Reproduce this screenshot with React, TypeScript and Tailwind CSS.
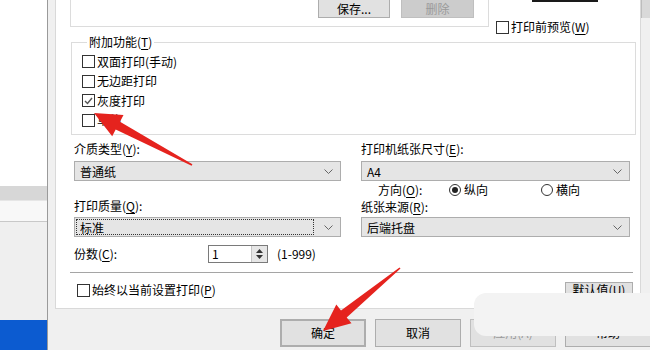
import React from 'react';

const font = { fontFamily: '"Noto Sans CJK SC", "Liberation Sans", sans-serif' };

function Box({ checked = false }: { checked?: boolean }) {
  return (
    <span className="w-[13px] h-[13px] border border-[#333] bg-white flex items-center justify-center shrink-0">
      {checked && (
        <svg width="9" height="8" viewBox="0 0 9 8">
          <path d="M1 4 L3.5 6.5 L8 1" fill="none" stroke="#555" strokeWidth="1.4" />
        </svg>
      )}
    </span>
  );
}

function Check({ label, checked = false }: { label: React.ReactNode; checked?: boolean }) {
  return (
    <div className="flex items-center h-[19.5px] gap-[2px]">
      <Box checked={checked} />
      <span className="leading-[16px]">{label}</span>
    </div>
  );
}

function Key({ k }: { k: string }) {
  return <span className="underline underline-offset-2">{k}</span>;
}

function Chevron() {
  return (
    <svg width="9" height="5" viewBox="0 0 9 5" className="shrink-0">
      <path d="M0.5 0.5 L4.5 4.5 L8.5 0.5" fill="none" stroke="#666" strokeWidth="1" />
    </svg>
  );
}

function Select({ value, focused = false, w }: { value: string; focused?: boolean; w: string }) {
  return (
    <div className={`${w} h-[20px] border border-[#adadad] bg-[#e5e5e5] flex items-center pr-[7px]`}>
      <div className={`flex-1 h-[16px] ml-[1px] mr-[10px] pl-[3px] leading-[15px] ${focused ? 'border border-dotted border-[#333]' : 'border border-transparent'}`}>
        {value}
      </div>
      <Chevron />
    </div>
  );
}

function Radio({ checked = false }: { checked?: boolean }) {
  return (
    <span className="w-[12px] h-[12px] rounded-full border border-[#333] bg-white flex items-center justify-center shrink-0">
      {checked && <span className="w-[6px] h-[6px] rounded-full bg-[#222]" />}
    </span>
  );
}

function Btn({ children, cls = '' }: { children: React.ReactNode; cls?: string }) {
  return (
    <div className={`w-[86px] h-[28px] flex items-center justify-center bg-[#e1e1e1] border border-[#adadad] shrink-0 ${cls}`}>
      {children}
    </div>
  );
}

function Arrow({ tail, tip }: { tail: [number, number]; tip: [number, number] }) {
  const dx = tip[0] - tail[0];
  const dy = tip[1] - tail[1];
  const len = Math.hypot(dx, dy);
  const ux = dx / len;
  const uy = dy / len;
  const nx = -uy;
  const ny = ux;
  const head = 27;
  const bx = tip[0] - ux * head;
  const by = tip[1] - uy * head;
  const pt = (x: number, y: number) => `${x.toFixed(1)},${y.toFixed(1)}`;
  const pts = [
    pt(tail[0] + nx * 0.8, tail[1] + ny * 0.8),
    pt(bx + nx * 4.5, by + ny * 4.5),
    pt(bx + nx * 12, by + ny * 12),
    pt(tip[0], tip[1]),
    pt(bx - nx * 12, by - ny * 12),
    pt(bx - nx * 4.5, by - ny * 4.5),
    pt(tail[0] - nx * 0.8, tail[1] - ny * 0.8),
  ].join(' ');
  return <polygon points={pts} fill="#e5231e" />;
}

export default function App() {
  return (
    <div className="relative w-[650px] h-[350px] overflow-hidden flex text-[12px] text-black bg-[#f0f0f0]" style={font}>
      {/* background window strip */}
      <div className="w-[47px] flex flex-col shrink-0">
        <div className="h-[186px] bg-white" />
        <div className="h-[14px] bg-[#d7d7d7]" />
        <div className="h-[22px] bg-[#f8f8f8] border-t border-[#e6e6e6] border-b border-b-[#c8c8c8]" />
        <div className="flex-1 bg-[#efefef]" />
        <div className="h-[30px] bg-[#0c5bd0]" />
      </div>
      <div className="w-px bg-[#9a9a9a] shrink-0" />

      {/* dialog */}
      <div className="flex-1 flex flex-col">
        <div className="flex">
          <div className="ml-[7px] w-[586px] h-[309px] bg-white border-l border-r border-b border-[#d9d9d9] flex flex-col">
            {/* top row */}
            <div className="flex h-[34px]">
              <div className="ml-[14px] w-[419px] h-[27px] border-l border-r border-b border-[#dcdcdc] flex justify-end pr-[14px] gap-[11px]">
                <div className="w-[72px] h-[18px] bg-[#e1e1e1] border border-[#adadad] border-t-0 flex items-center justify-center leading-[16px]">保存...</div>
                <div className="w-[73px] h-[18px] bg-[#cccccc] border border-[#bfbfbf] border-t-0 flex items-center justify-center text-[#9a9a9a] leading-[16px]">删除</div>
              </div>
              <div className="flex flex-col">
                <div className="ml-[43px] w-[66px] h-[4px] bg-[#e1e1e1] border-l border-r border-b-2 border-[#1a1a1a]" />
                <div className="ml-[7px] mt-[18px] flex items-center gap-[2px]">
                  <Box />
                  <span className="leading-[14px]">打印前预览(<Key k="W" />)</span>
                </div>
              </div>
            </div>

            {/* 附加功能 */}
            <fieldset className="ml-[15px] w-[565px] border border-[#dcdcdc] pl-[10px] pt-[2px] pb-[4px]">
              <legend className="ml-[5px] px-[2px] leading-[16px]">附加功能(<Key k="T" />)</legend>
              <Check label="双面打印(手动)" />
              <Check label="无边距打印" />
              <Check label="灰度打印" checked />
              <Check label="草稿" />
            </fieldset>

            {/* selects */}
            <div className="ml-[18px] mt-[6px] flex gap-[20px]">
              <div className="flex flex-col w-[267px]">
                <div className="h-[16px] leading-[16px]">介质类型(<Key k="Y" />):</div>
                <div className="mt-[4px]"><Select value="普通纸" w="w-[267px]" /></div>
                <div className="mt-[17px] h-[16px] leading-[16px]">打印质量(<Key k="Q" />):</div>
                <div className="mt-[3px]"><Select value="标准" focused w="w-[267px]" /></div>
              </div>
              <div className="flex flex-col w-[269px]">
                <div className="h-[16px] leading-[16px]">打印机纸张尺寸(<Key k="E" />):</div>
                <div className="mt-[4px]"><Select value="A4" w="w-[269px]" /></div>
                <div className="mt-[1px] h-[16px] flex items-center leading-[16px]">
                  <span className="ml-[17px] w-[71px]">方向(<Key k="O" />):</span>
                  <Radio checked />
                  <span className="ml-[3px] w-[77px]">纵向</span>
                  <Radio />
                  <span className="ml-[3px]">横向</span>
                </div>
                <div className="mt-[1px] h-[16px] leading-[16px]">纸张来源(<Key k="R" />):</div>
                <div className="mt-[2px]"><Select value="后端托盘" w="w-[269px]" /></div>
              </div>
            </div>

            {/* copies */}
            <div className="ml-[18px] mt-[8px] h-[18px] flex items-center">
              <span className="w-[134px] leading-[16px]">份数(<Key k="C" />):</span>
              <div className="w-[60px] h-[18px] border border-[#7a7a7a] bg-white flex">
                <span className="flex-1 pl-[3px] leading-[16px]">1</span>
                <div className="w-[16px] bg-[#e6e6e6] border-l border-[#c4c4c4] flex flex-col items-center justify-center gap-[2px]">
                  <svg width="7" height="4" viewBox="0 0 7 4"><path d="M0 4 L3.5 0 L7 4Z" fill="#333" /></svg>
                  <svg width="7" height="4" viewBox="0 0 7 4"><path d="M0 0 L3.5 4 L7 0Z" fill="#333" /></svg>
                </div>
              </div>
              <span className="ml-[9px] leading-[16px]">(1-999)</span>
            </div>

            <div className="ml-[14px] mt-[9px] w-[563px] border-t border-[#a5a5a5]" />

            <div className="ml-[21px] mt-[9px] w-[556px] flex items-center justify-between">
              <div className="flex items-center gap-[2px]">
                <Box />
                <span className="leading-[14px]">始终以当前设置打印(<Key k="P" />)</span>
              </div>
              <div className="w-[68px] h-[16px] bg-[#e1e1e1] border border-[#adadad] flex items-center justify-center leading-[14px]">默认值(<Key k="U" />)</div>
            </div>
          </div>
          <div className="flex-1">
            <div className="h-[18px] bg-[#d9d9d9] border-l border-[#bdbdbd]" />
          </div>
        </div>

        {/* bottom buttons */}
        <div className="mt-[10px] pl-[232px] flex gap-[9px]">
          <Btn cls="border-2 border-[#0078d7]">确定</Btn>
          <Btn>取消</Btn>
          <Btn cls="text-[#9a9a9a] bg-[#cccccc] border-[#bfbfbf]">应用(A)</Btn>
          <Btn>帮助</Btn>
        </div>
      </div>

      {/* watermark overlay */}
      <div className="absolute left-[474px] top-[293px] w-[200px] h-[43px] rounded-[12px] bg-[#f3f3f3]" />

      {/* red arrows */}
      <svg className="absolute left-0 top-0 pointer-events-none" width="650" height="350">
        <Arrow tail={[192, 165]} tip={[94, 113]} />
        <Arrow tail={[400, 268]} tip={[323, 331]} />
      </svg>
    </div>
  );
}
